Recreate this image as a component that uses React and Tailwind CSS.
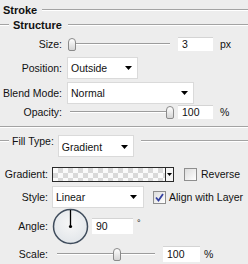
import React from "react";

const Line = ({ className = "" }) => (
  <div className={"h-[2px] border-t border-[#a3a3a3] bg-white " + className} />
);

const Arrow = () => (
  <svg width="7" height="4" viewBox="0 0 7 4" className="shrink-0">
    <path d="M0 0H7L3.5 4Z" fill="#000" />
  </svg>
);

const Select = ({ value, className = "", pr = "pr-[5px]" }) => (
  <div
    className={
      "flex items-center justify-between bg-white border border-[#dadada] pl-[3px] " +
      pr +
      " " +
      className
    }
  >
    <span>{value}</span>
    <Arrow />
  </div>
);

const Input = ({ value, className = "" }) => (
  <div
    className={
      "flex items-center bg-white border-t border-[#d4d4d4] pl-[4px] " + className
    }
  >
    {value}
  </div>
);

const Slider = ({ left, className = "" }) => (
  <div className={"relative flex items-center h-[14px] " + className}>
    <div className="h-[2px] w-full mx-[3px] border-t border-[#9c9c9c] bg-white" />
    <div
      className="absolute top-[1px] w-[8px] h-[13px] rounded-t-[4px] rounded-b-[2px] border border-[#8a8a8a] bg-gradient-to-b from-white to-[#d4d4d4]"
      style={{ left }}
    />
  </div>
);

const Checkbox = ({ checked }) => (
  <div className="w-[13px] h-[13px] border border-[#8e8e8e] bg-gradient-to-br from-[#dcdcdc] to-white flex items-center justify-center shrink-0">
    {checked && (
      <svg width="9" height="9" viewBox="0 0 9 9">
        <path
          d="M1 4.5L3.5 7.5L8 1"
          fill="none"
          stroke="#3340a0"
          strokeWidth="1.8"
        />
      </svg>
    )}
  </div>
);

export default function App() {
  return (
    <div
      className="w-[248px] h-[264px] bg-[#ededed] text-[#111] text-[10.5px] overflow-hidden leading-none"
      style={{ fontFamily: '"Liberation Sans", Arial, sans-serif' }}
    >
      {/* Stroke header */}
      <div className="flex items-center h-[20px] pl-[3px]">
        <span className="font-bold text-[11px]">Stroke</span>
        <Line className="flex-1 ml-[5px]" />
      </div>
      {/* Structure */}
      <div className="flex items-center h-[10px]">
        <Line className="w-[9px]" />
        <span className="font-bold text-[11px] ml-[4px]">Structure</span>
        <Line className="flex-1 ml-[6px]" />
      </div>

      {/* Size */}
      <div className="flex items-center h-[20px] mt-[4px]">
        <span className="w-[62px] text-right">Size:</span>
        <Slider left={1} className="ml-[5px] w-[106px]" />
        <Input value="3" className="ml-[5px] w-[35px] h-[14px]" />
        <span className="ml-[7px]">px</span>
      </div>

      {/* Position */}
      <div className="flex items-center h-[22px] mt-[3px]">
        <span className="w-[62px] text-right">Position:</span>
        <Select value="Outside" className="ml-[5px] w-[71px] h-[22px]" />
      </div>

      {/* Blend Mode */}
      <div className="flex items-center h-[22px] mt-[3px]">
        <span className="w-[62px] text-right">Blend Mode:</span>
        <Select value="Normal" className="ml-[5px] w-[127px] h-[22px]" />
      </div>

      {/* Opacity */}
      <div className="flex items-center h-[16px]">
        <span className="w-[62px] text-right">Opacity:</span>
        <Slider left={99} className="ml-[5px] w-[106px]" />
        <Input value="100" className="ml-[5px] w-[35px] h-[14px]" />
        <span className="ml-[7px]">%</span>
      </div>

      <Line className="mt-[6px] w-full" />

      {/* Fill Type */}
      <div className="flex items-start h-[22px] mt-[7px]">
        <div className="w-[9px] h-[12px] flex items-center">
          <Line className="w-full" />
        </div>
        <span className="ml-[3px] leading-[12px]">Fill Type:</span>
        <Select value="Gradient" className="ml-[4px] w-[76px] h-[22px] pt-[2px]" />
        <div className="flex-1 ml-[7px] h-[12px] flex items-center">
          <Line className="w-full" />
        </div>
      </div>

      {/* Gradient */}
      <div className="flex items-center h-[16px] mt-[9px]">
        <span className="w-[48px] text-right">Gradient:</span>
        <div className="ml-[4px] flex h-[15px] border border-[#2a2a2a]">
          <div className="w-[112px] h-full bg-[conic-gradient(#d9d9d9_25%,#fafafa_0_50%,#d9d9d9_0_75%,#fafafa_0)] bg-[length:10px_10px]" />
          <div className="w-[8px] h-full bg-[#f4f4f4] border-l border-[#2a2a2a] flex items-center justify-center">
            <svg width="5" height="3" viewBox="0 0 5 3">
              <path d="M0 0H5L2.5 3Z" fill="#000" />
            </svg>
          </div>
        </div>
        <div className="ml-[10px]">
          <Checkbox />
        </div>
        <span className="ml-[4px]">Reverse</span>
      </div>

      {/* Style */}
      <div className="flex items-center h-[22px] mt-[4px]">
        <span className="w-[48px] text-right">Style:</span>
        <Select value="Linear" className="ml-[4px] w-[92px] h-[22px]" pr="pr-[6px]" />
        <div className="ml-[9px]">
          <Checkbox checked />
        </div>
        <span className="ml-[3px]">Align with Layer</span>
      </div>

      {/* Angle */}
      <div className="flex items-center h-[36px]">
        <span className="w-[48px] text-right">Angle:</span>
        <svg width="37" height="37" viewBox="0 0 37 37" className="ml-[4px] shrink-0">
          <defs>
            <radialGradient id="dialg" cx="0.5" cy="0.4" r="0.6">
              <stop offset="0" stopColor="#f7f7f7" />
              <stop offset="1" stopColor="#e2e6ea" />
            </radialGradient>
          </defs>
          <circle cx="18.5" cy="18.5" r="17" fill="url(#dialg)" stroke="#3f4c5c" strokeWidth="1.5" />
          <line x1="18.5" y1="18.5" x2="18.5" y2="2" stroke="#000" strokeWidth="1.3" />
          <circle cx="18.5" cy="18.5" r="1.6" fill="#000" />
        </svg>
        <Input value="90" className="ml-[3px] w-[41px] h-[16px]" />
        <span className="ml-[4px] self-start mt-[11px] text-[9px]">°</span>
      </div>

      {/* Scale */}
      <div className="flex items-center h-[16px] mt-[2px]">
        <span className="w-[48px] text-right">Scale:</span>
        <Slider left={59} className="ml-[6px] w-[104px]" />
        <Input value="100" className="ml-[5px] w-[37px] h-[16px]" />
        <span className="ml-[4px]">%</span>
      </div>
    </div>
  );
}
